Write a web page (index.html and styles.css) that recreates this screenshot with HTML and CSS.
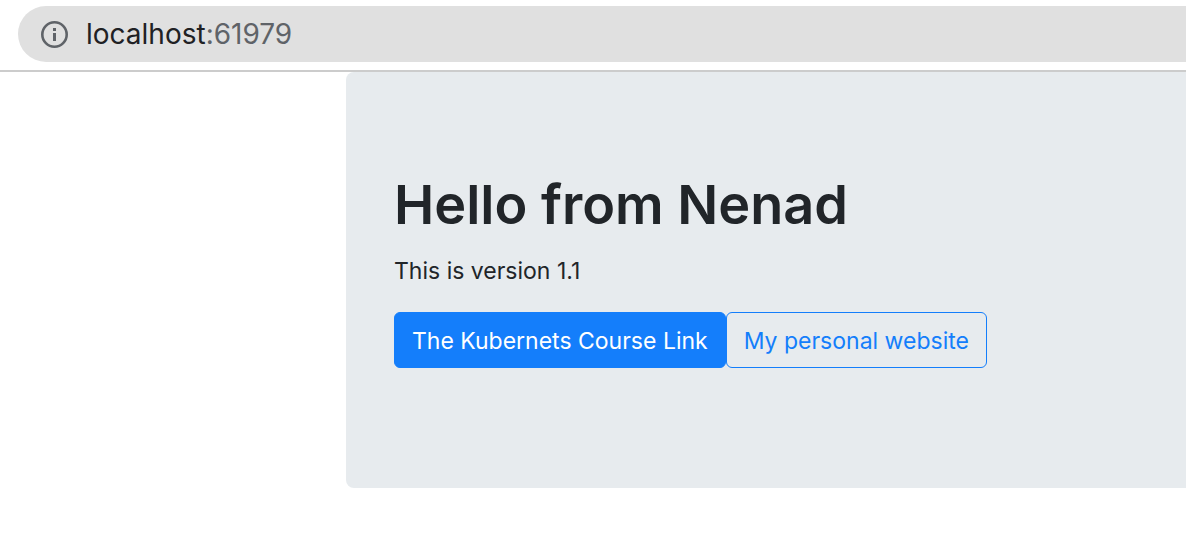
FILE: index.html
```html
<!DOCTYPE html>
<html lang="en">
<head>
<meta charset="utf-8">
<meta name="viewport" content="width=device-width, initial-scale=1">
<title>Hello from Nenad</title>
<link rel="stylesheet" href="styles.css">
</head>
<body>
<header class="toolbar">
  <div class="address">
    <svg class="info" viewBox="0 0 28 28" aria-hidden="true">
      <circle cx="14.5" cy="14.5" r="12.2" fill="none" stroke="currentColor" stroke-width="2.6"/>
      <path d="M13 13h3v8h-3zM13 8h3v3h-3z" fill="currentColor"/>
    </svg>
    <p class="url">localhost<span class="port">:61979</span></p>
  </div>
</header>
<main class="page">
  <section class="jumbotron">
    <h1 class="title">Hello from Nenad</h1>
    <p class="lead">This is version 1.1</p>
    <div class="actions">
      <a class="btn btn-primary" href="#course">The Kubernets Course Link</a>
      <a class="btn btn-outline" href="#website">My personal website</a>
    </div>
  </section>
</main>
</body>
</html>
```
FILE: styles.css
```css
* {
  box-sizing: border-box;
}

body {
  margin: 0;
  background: #fff;
  color: #212529;
  font-family: Inter, "Liberation Sans", sans-serif;
}

.toolbar {
  padding: 6px 0 8px 18px;
  border-bottom: 2px solid #ccc;
}

.address {
  display: flex;
  align-items: center;
  gap: 18px;
  padding: 10px 22px;
  border-radius: 28px 0 0 28px;
  background: #e0e0e0;
}

.info {
  width: 28px;
  height: 28px;
  color: #5f6368;
}

.url {
  margin: 0;
  color: #202124;
  font-size: 28px;
  line-height: 36px;
  white-space: nowrap;
}

.port {
  color: #5f6368;
}

.page {
  padding-left: 346px;
}

.jumbotron {
  padding: 97px 48px 120px;
  border-radius: 8px 0 0 8px;
  background: #e7ebee;
}

.title {
  margin: 0 0 12px;
  font-size: 54px;
  font-weight: 600;
  line-height: 72px;
}

.lead {
  margin: 0 0 23px;
  font-size: 23px;
  line-height: 36px;
}

.actions {
  display: flex;
}

.btn {
  padding: 10px 17px 8px;
  border: 1px solid #147efb;
  border-radius: 6px;
  font-size: 23px;
  line-height: 36px;
  text-decoration: none;
  white-space: nowrap;
}

.btn-primary {
  background: #147efb;
  color: #fff;
}

.btn-outline {
  color: #147efb;
}
```
